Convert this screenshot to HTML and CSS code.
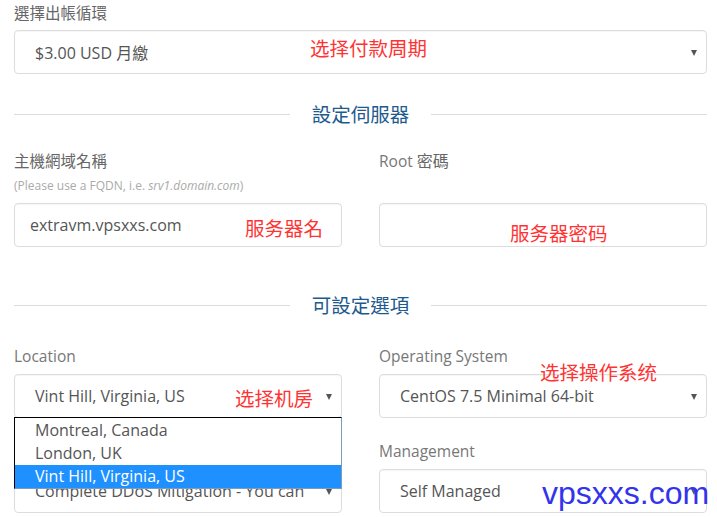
FILE: index.html
```html
<!DOCTYPE html>
<html lang="zh-Hant">
<head>
    <meta charset="UTF-8">
    <meta name="viewport" content="width=device-width, initial-scale=1.0">
    <title>設定伺服器</title>
    <link rel="stylesheet" href="styles.css">
</head>
<body>
    <div class="page">
        <div class="group">
            <label class="label zh">選擇出帳循環</label>
            <div class="select">
                <span>$3.00 USD <span class="zh">月繳</span></span>
                <span class="note note-cycle">选择付款周期</span>
            </div>
        </div>

        <div class="divider divider-first"><span>設定伺服器</span></div>

        <div class="row row-server">
            <div class="group">
                <label class="label zh">主機網域名稱</label>
                <div class="help">(Please use a FQDN, i.e. <em>srv1.domain.com</em>)</div>
                <div class="input">
                    extravm.vpsxxs.com
                    <span class="note note-host">服务器名</span>
                </div>
            </div>
            <div class="group">
                <label class="label">Root <span class="zh">密碼</span></label>
                <div class="help">&nbsp;</div>
                <div class="input">
                    <span class="note note-pass">服务器密码</span>
                </div>
            </div>
        </div>

        <div class="divider divider-second"><span>可設定選項</span></div>

        <div class="row row-options">
            <div class="col">
                <div class="group">
                    <label class="label">Location</label>
                    <div class="select">
                        <span>Vint Hill, Virginia, US</span>
                        <span class="note note-loc">选择机房</span>
                        <ul class="dropdown">
                            <li>Montreal, Canada</li>
                            <li>London, UK</li>
                            <li class="selected">Vint Hill, Virginia, US</li>
                        </ul>
                    </div>
                </div>
                <div class="group">
                    <label class="label"></label>
                    <div class="select">
                        <span class="value-clip">Complete DDoS Mitigation - You can protect your server</span>
                    </div>
                </div>
            </div>
            <div class="col">
                <div class="group">
                    <label class="label">Operating System</label>
                    <div class="select">
                        <span>CentOS 7.5 Minimal 64-bit</span>
                        <span class="note note-os">选择操作系统</span>
                    </div>
                </div>
                <div class="group">
                    <label class="label">Management</label>
                    <div class="select">
                        <span>Self Managed</span>
                    </div>
                </div>
            </div>
        </div>

        <div class="watermark">vpsxxs.com</div>
    </div>
</body>
</html>
```

FILE: styles.css
```css
body {
    margin: 0;
    background: #fff;
    font-family: "Open Sans", "Noto Sans CJK TC", sans-serif;
    color: #555;
}

.page {
    position: relative;
    width: 693px;
    height: 517px;
    padding: 2px 10px 0 14px;
    overflow: hidden;
}

.zh {
    font-family: "Noto Sans CJK TC", sans-serif;
    font-size: 16px;
}

.label {
    display: block;
    font-size: 15.5px;
    line-height: 20px;
    height: 20px;
    margin-bottom: 8px;
    color: #777;
}

.label.zh,
.label .zh {
    color: #666;
}

.help {
    font-size: 12px;
    line-height: 16px;
    color: #aaa;
    margin-bottom: 9px;
}

.help em {
    font-style: italic;
}

.select,
.input {
    position: relative;
    box-sizing: border-box;
    height: 44px;
    line-height: 42px;
    border: 1px solid #ddd;
    border-radius: 4px;
    box-shadow: inset 0 1px 1px rgba(0, 0, 0, 0.04);
    font-size: 16px;
    color: #555;
    background: #fff;
    white-space: nowrap;
}

.select {
    padding: 0 36px 0 20px;
}

.select::after {
    content: "";
    position: absolute;
    right: 9px;
    top: 19px;
    border-left: 3.5px solid transparent;
    border-right: 3.5px solid transparent;
    border-top: 6px solid #555;
}

.value-clip {
    display: block;
    overflow: hidden;
}

.input {
    padding: 0 15px;
}

.divider {
    display: flex;
    align-items: center;
    gap: 22px;
    height: 24px;
    font-family: "Noto Sans CJK TC", sans-serif;
    font-size: 19.5px;
    line-height: 24px;
    color: #1d5a8e;
}

.divider::before,
.divider::after {
    content: "";
    flex: 1;
    height: 1px;
    background: #ddd;
}

.divider-first {
    margin-top: 28px;
}

.divider-second {
    margin-top: 46px;
}

.row {
    display: grid;
    grid-template-columns: 328px 328px;
    column-gap: 37px;
}

.row-server {
    margin-top: 24px;
}

.row-options {
    margin-top: 29px;
}

.col .group + .group {
    margin-top: 23px;
}

.note {
    position: absolute;
    font-family: "Noto Sans CJK SC", sans-serif;
    font-size: 19.5px;
    line-height: 24px;
    color: #f33;
    white-space: nowrap;
    z-index: 2;
}

.note-cycle { left: 295px; top: 5px; }
.note-host { left: 230px; top: 12px; }
.note-pass { left: 130px; top: 17px; }
.note-loc { left: 220px; top: 11px; }
.note-os { left: 160px; top: -15px; }

.dropdown {
    position: absolute;
    left: -1px;
    top: 42px;
    width: 328px;
    box-sizing: border-box;
    margin: 0;
    padding: 1px 0 0;
    list-style: none;
    background: #fff;
    border: 1px solid;
    border-color: #000 #7f9db9 #7f9db9 #000;
    z-index: 3;
}

.dropdown li {
    height: 23px;
    line-height: 23px;
    padding-left: 20px;
    color: #555;
}

.dropdown li.selected {
    background: #1e90ff;
    color: #fff;
}

.watermark {
    position: absolute;
    left: 542px;
    top: 477px;
    font-family: "Liberation Sans", Arial, sans-serif;
    font-size: 32px;
    line-height: 32px;
    color: #3333ee;
    z-index: 4;
}
```
